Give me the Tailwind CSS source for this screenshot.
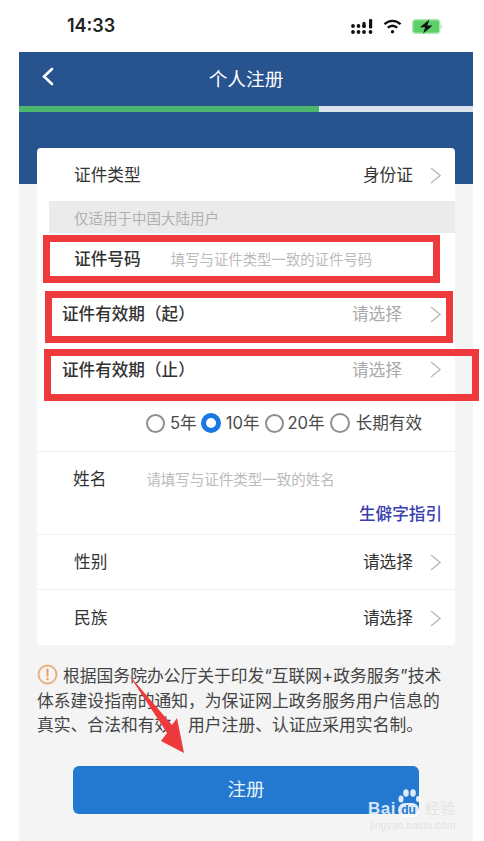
<!DOCTYPE html>
<html lang="zh">
<head>
<meta charset="utf-8">
<script src="https://cdn.jsdelivr.net/npm/@tailwindcss/browser@4"></script>
</head>
<body class="bg-white">
<div class="relative w-[484px] h-[841px] overflow-hidden bg-white font-['Inter','Noto_Sans_CJK_SC',sans-serif] text-[#333]">
  <!-- status bar -->
  <div class="h-[52px] pl-[67px] pr-[42px] flex items-center justify-between">
    <span class="text-[18px] font-semibold text-[#222] leading-none pb-[1px]">14:33</span>
    <div class="flex items-center gap-[10px]">
      <svg width="22" height="15" viewBox="0 0 22 15" fill="#111">
        <circle cx="2" cy="7" r="1.900"/><circle cx="7.500" cy="7" r="1.900"/><circle cx="13" cy="7" r="1.900"/>
        <circle cx="2" cy="13" r="1.900"/><circle cx="7.500" cy="13" r="1.900"/><circle cx="13" cy="13" r="1.900"/><circle cx="19.500" cy="13" r="1.900"/>
        <rect x="11.500" y="3" width="3" height="6" rx="1.200"/><rect x="18" y="0" width="3.200" height="9.500" rx="1.200"/>
      </svg>
      <svg width="19" height="15" viewBox="0 0 19 15" fill="none" stroke="#111" stroke-width="2.400">
        <path d="M1.500 5.300a11 11 0 0 1 16 0"/><path d="M4.800 8.800a6.300 6.300 0 0 1 9.400 0"/><circle cx="9.500" cy="12.800" r="1.700" fill="#111" stroke="none"/>
      </svg>
      <svg width="30" height="15" viewBox="0 0 30 15">
        <rect x="0.700" y="0.700" width="27" height="13.600" rx="3" fill="#5ccf66" stroke="#a9e6ad" stroke-width="1.400"/>
        <rect x="28.700" y="5.500" width="1.300" height="4" rx="0.600" fill="#ccc"/>
        <path d="M17.500 0.500 8 8.300h5.200l-2 6.200L20.500 6.500h-5.200z" fill="#111"/>
      </svg>
    </div>
  </div>

  <div class="mx-[19px] w-[454px] h-[789px] bg-[#f4f4f5]">
    <!-- blue header -->
    <div class="h-[132px] bg-[#27538f]">
      <div class="relative h-[54px] flex items-center justify-center">
        <svg class="absolute left-[22px] top-[15px]" width="14" height="19" viewBox="0 0 14 19" fill="none" stroke="#fff" stroke-width="2.600" stroke-linecap="round"><path d="M11 2 3 9.500l8 7.500"/></svg>
        <span class="text-[18.700px] text-white pt-[3px]">个人注册</span>
      </div>
      <div class="h-[6px] bg-[#dbe3ee]"><div class="h-full w-[300px] bg-[#4cb86f]"></div></div>
    </div>

    <!-- card -->
    <div class="mx-[18px] -mt-[36px] relative h-[497px] bg-white rounded-[4px] flex flex-col text-[16.700px]">
      <div class="h-[53px] pl-[37px] pr-[14px] flex items-center justify-between">
        <span class="pt-[3px]">证件类型</span>
        <div class="flex items-center gap-[17px]"><span class="pt-[3px]">身份证</span><svg class="mt-[3px]" width="11" height="17" viewBox="0 0 11 17" fill="none" stroke="#bdbdbd" stroke-width="1.500"><path d="m1 1 9 7.500-9 7.500"/></svg></div>
      </div>
      <div class="ml-[12px] h-[32px] pl-[25px] pt-[3px] bg-[#ebebeb] flex items-center text-[14.500px] text-[#b0b0b0]">仅适用于中国大陆用户</div>
      <div class="h-[53px] pl-[37px] flex items-center gap-[30px]">
        <span class="font-medium">证件号码</span>
        <span class="text-[14.400px] text-[#bbb]">填写与证件类型一致的证件号码</span>
      </div>
      <div class="h-[56px] pl-[25px] pr-[14px] flex items-center justify-between">
        <span class="font-medium text-[16.600px] pt-[1px]">证件有效期（起）</span>
        <div class="flex items-center gap-[28px] text-[#aaa]"><span class="pt-[2px]">请选择</span><svg class="mt-[1px]" width="11" height="17" viewBox="0 0 11 17" fill="none" stroke="#bdbdbd" stroke-width="1.500"><path d="m1 1 9 7.500-9 7.500"/></svg></div>
      </div>
      <div class="h-[55px] pl-[25px] pr-[14px] flex items-center justify-between">
        <span class="font-medium text-[16.600px] pt-[1px]">证件有效期（止）</span>
        <div class="flex items-center gap-[28px] text-[#aaa]"><span class="pt-[2px]">请选择</span><svg class="mt-[1px]" width="11" height="17" viewBox="0 0 11 17" fill="none" stroke="#bdbdbd" stroke-width="1.500"><path d="m1 1 9 7.500-9 7.500"/></svg></div>
      </div>
      <div class="h-[55px] pl-[109px] flex items-center border-b border-[#f0f0f0] text-[16.600px] text-[#4a4a4a] pb-[2px]">
        <span class="w-[19px] h-[19px] rounded-full border-2 border-[#8e8e8e]"></span>
        <span class="ml-[5px]">5年</span>
        <span class="ml-[4px] w-[20px] h-[20px] rounded-full border-[5px] border-[#1677e5]"></span>
        <span class="ml-[5px]">10年</span>
        <span class="ml-[5px] w-[19px] h-[19px] rounded-full border-2 border-[#8e8e8e]"></span>
        <span class="ml-[4px]">20年</span>
        <span class="ml-[5px] w-[20px] h-[20px] rounded-full border-2 border-[#8e8e8e]"></span>
        <span class="ml-[6px]">长期有效</span>
      </div>
      <div class="h-[83px] pl-[36px] pr-[13px] flex flex-col border-b border-[#f0f0f0]">
        <div class="flex items-center h-[55px] gap-[40px]">
          <span>姓名</span>
          <span class="text-[14.500px] text-[#bbb]">请填写与证件类型一致的姓名</span>
        </div>
        <div class="text-right text-[16.600px] font-medium text-[#3a3fb0] leading-[14px]">生僻字指引</div>
      </div>
      <div class="h-[55px] pl-[37px] pr-[14px] flex items-center justify-between border-b border-[#f0f0f0]">
        <span class="pt-[2px]">性别</span>
        <div class="flex items-center gap-[17px]"><span class="pt-[2px]">请选择</span><svg class="mt-[2px]" width="11" height="17" viewBox="0 0 11 17" fill="none" stroke="#bdbdbd" stroke-width="1.500"><path d="m1 1 9 7.500-9 7.500"/></svg></div>
      </div>
      <div class="h-[55px] pl-[37px] pr-[14px] flex items-center justify-between">
        <span class="pt-[2px]">民族</span>
        <div class="flex items-center gap-[17px]"><span class="pt-[2px]">请选择</span><svg class="mt-[2px]" width="11" height="17" viewBox="0 0 11 17" fill="none" stroke="#bdbdbd" stroke-width="1.500"><path d="m1 1 9 7.500-9 7.500"/></svg></div>
      </div>
    </div>

    <!-- notice -->
    <p class="mx-[18px] mt-[19px] w-[412px] text-[16.800px] leading-[24.500px] text-[#444]">
      <svg class="inline-block align-[-3px] mr-[5px]" width="21" height="21" viewBox="0 0 21 21" fill="none"><circle cx="10.500" cy="10.500" r="9" stroke="#e8b27e" stroke-width="2"/><path d="M10.500 5.500v6.500" stroke="#e8a060" stroke-width="2" stroke-linecap="round"/><circle cx="10.500" cy="15" r="1.200" fill="#e8a060"/></svg>根据国务院办公厅关于印发“互联网+政务服务”技术体系建设指南的通知，为保证网上政务服务用户信息的真实、合法和有效、用户注册、认证应采用实名制。
    </p>

    <!-- button -->
    <div class="mx-[54px] mt-[28px] h-[48px] w-[346px] rounded-[6px] bg-[#2379cf] flex items-center justify-center text-[18.500px] text-white/90 pt-[1px]">注册</div>
  </div>

  <!-- red annotation boxes -->
  <div class="absolute left-[43px] top-[235px] w-[397px] h-[48px] border-[7px] border-[#ef3a3d]"></div>
  <div class="absolute left-[45px] top-[291px] w-[408px] h-[52px] border-[7px] border-[#ef3a3d]"></div>
  <div class="absolute left-[44px] top-[349px] w-[435px] h-[52px] border-[7px] border-[#ef3a3d]"></div>

  <!-- red arrow -->
  <svg class="absolute left-0 top-0" width="484" height="841" viewBox="0 0 484 841" fill="#ef3a3d">
    <polygon points="129,675 172,725 177,718 184,753 161,741 167,733"/>
  </svg>

  <!-- watermark -->
  <div class="absolute left-[368px] top-[800px] flex items-end text-white/80 font-['Liberation_Sans',sans-serif] font-bold text-[17px] tracking-[0.500px] leading-none">
    <span>Bai</span>
    <span class="relative ml-[2px] w-[21px] h-[14px] rounded-full bg-white/85 text-[#2379cf] text-[12px] tracking-normal leading-[14px] text-center">du
      <svg class="absolute left-[-1px] top-[-15px]" width="24" height="16" viewBox="0 0 24 16" fill="#ffffff" fill-opacity="0.850"><ellipse cx="4" cy="11" rx="2.500" ry="3.500"/><ellipse cx="9" cy="5" rx="2.800" ry="3.800"/><ellipse cx="16" cy="5" rx="2.800" ry="3.800"/><ellipse cx="21" cy="11" rx="2" ry="3"/></svg>
    </span>
  </div>
  <span class="absolute left-[425px] top-[801px] text-[15px] leading-none text-[#e4e4e4]">经验</span>
  <span class="absolute left-[370px] top-[821px] text-[9.500px] leading-none tracking-[0.200px] text-[#e2e2e2]">jingyan.baidu.com</span>
</div>
</body>
</html>
